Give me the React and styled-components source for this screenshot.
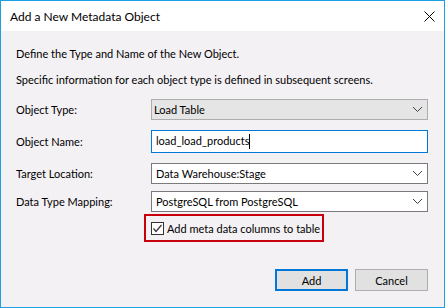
import React from 'react'
import styled, { createGlobalStyle } from 'styled-components'

const GlobalStyle = createGlobalStyle`
  html, body {
    margin: 0;
    padding: 0;
    background: #ffffff;
  }
  * {
    box-sizing: border-box;
  }
`

const Window = styled.div`
  width: 445px;
  height: 308px;
  border: 1px solid #1ba1e2;
  display: flex;
  flex-direction: column;
  font-family: Lato, 'Noto Sans', sans-serif;
  font-size: 11px;
  color: #000;
  background: #f4f1f4;
  white-space: nowrap;
`

const TitleBar = styled.div`
  height: 30px;
  background: #fff;
  display: flex;
  align-items: center;
  justify-content: space-between;
  padding: 0 9px 0 9px;
  font-size: 12px;
`

const CloseIcon = styled.svg`
  width: 11px;
  height: 11px;
`

const Body = styled.div`
  flex: 1;
  display: flex;
  flex-direction: column;
  padding: 15px 16px 0 15px;
`

const Intro = styled.p`
  margin: 0 0 ${p => p.$gap || 0}px;
  line-height: 16px;
`

const Row = styled.div`
  display: grid;
  grid-template-columns: 135px 277px;
  align-items: center;
  margin-top: ${p => p.$top || 0}px;
`

const Label = styled.div`
  line-height: 16px;
`

const Field = styled.div`
  height: ${p => p.$h || 21}px;
  display: flex;
  align-items: center;
  justify-content: space-between;
  padding: 0 4px 0 ${p => p.$pl || 4}px;
  background: ${p => (p.$readonly ? '#e5e5e5' : '#fff')};
  border: 1px solid ${p => p.$border || '#7a7a7a'};
`

const Caret = styled.span`
  display: inline-block;
  width: 1px;
  height: 15px;
  background: #000;
  vertical-align: middle;
`

const Chevron = () => (
  <svg width="11" height="7" viewBox="0 0 11 7">
    <path d="M1 1 L5.5 5.5 L10 1" fill="none" stroke="#404040" strokeWidth="1" />
  </svg>
)

const CheckRow = styled.div`
  margin: 2px 0 0 128px;
  width: 180px;
  height: 28px;
  border: 2px solid #c7000b;
  display: flex;
  align-items: center;
  padding-left: 5px;
  gap: 3px;
`

const CheckBox = styled.span`
  width: 13px;
  height: 13px;
  border: 1px solid #333;
  background: #fff;
  display: flex;
  align-items: center;
  justify-content: center;
`

const Buttons = styled.div`
  display: flex;
  justify-content: flex-end;
  gap: 7px;
  margin-top: 27px;
`

const Button = styled.button`
  width: 73px;
  height: 22px;
  font: inherit;
  color: #000;
  background: #e1e1e1;
  border: ${p => (p.$primary ? '2px solid #0078d7' : '1px solid #adadad')};
  padding: 0;
`

export default function App() {
  return (
    <>
      <GlobalStyle />
      <Window>
        <TitleBar>
          <span>Add a New Metadata Object</span>
          <CloseIcon viewBox="0 0 11 11">
            <path d="M0.5 0.5 L10.5 10.5 M10.5 0.5 L0.5 10.5" stroke="#000" strokeWidth="1" />
          </CloseIcon>
        </TitleBar>
        <Body>
          <Intro $gap={10}>Define the Type and Name of the New Object.</Intro>
          <Intro>Specific information for each object type is defined in subsequent screens.</Intro>
          <Row $top={11}>
            <Label>Object Type:</Label>
            <Field $readonly $border="#adadad" $pl={2}>
              <span>Load Table</span>
              <Chevron />
            </Field>
          </Row>
          <Row $top={10}>
            <Label>Object Name:</Label>
            <Field $h={23} $border="#0078d7">
              <span>
                load_load_products
                <Caret />
              </span>
            </Field>
          </Row>
          <Row $top={10}>
            <Label>Target Location:</Label>
            <Field>
              <span>Data Warehouse:Stage</span>
              <Chevron />
            </Field>
          </Row>
          <Row $top={7}>
            <Label>Data Type Mapping:</Label>
            <Field>
              <span>PostgreSQL from PostgreSQL</span>
              <Chevron />
            </Field>
          </Row>
          <CheckRow>
            <CheckBox>
              <svg width="11" height="11" viewBox="0 0 11 11">
                <path d="M1.5 5.5 L4 8.5 L9.5 2" fill="none" stroke="#333" strokeWidth="1.2" />
              </svg>
            </CheckBox>
            <span>Add meta data columns to table</span>
          </CheckRow>
          <Buttons>
            <Button $primary>Add</Button>
            <Button>Cancel</Button>
          </Buttons>
        </Body>
      </Window>
    </>
  )
}
